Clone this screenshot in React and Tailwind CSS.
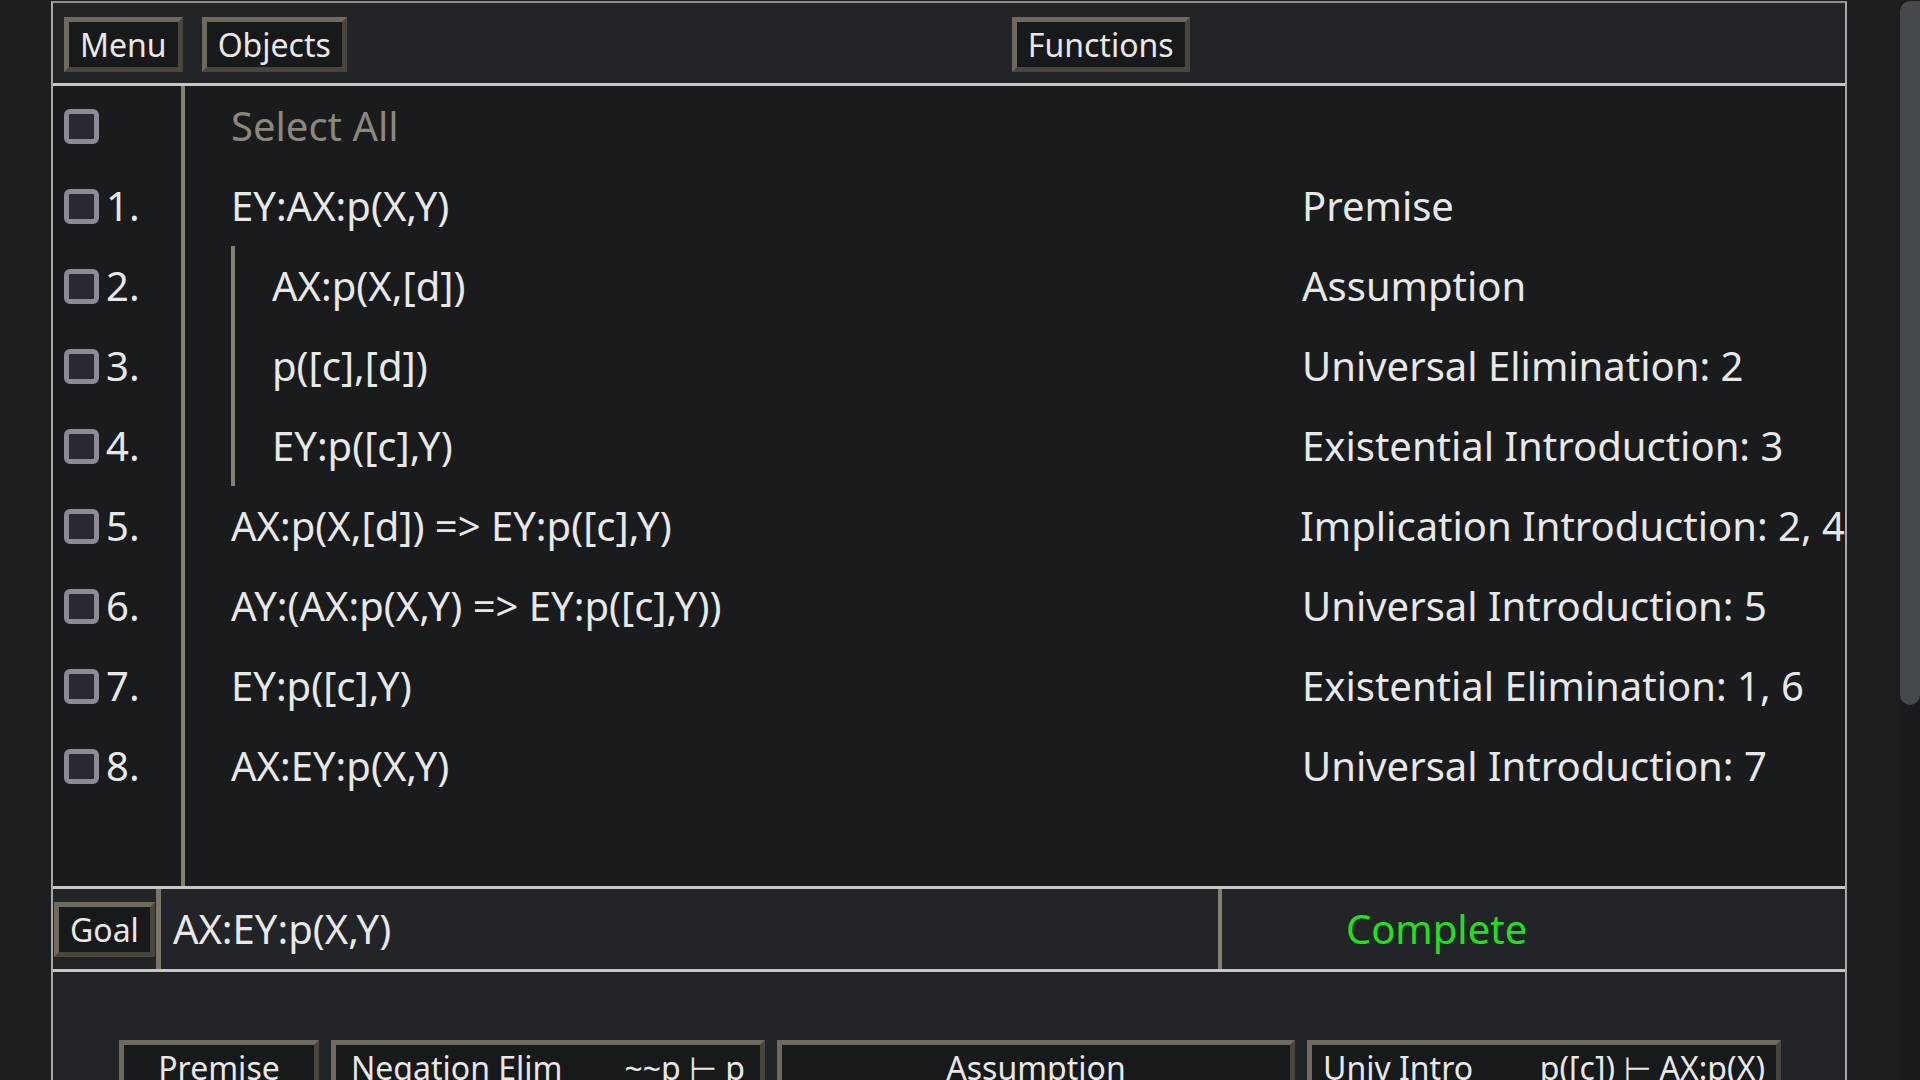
import React, { useState } from "react";

const lines = [
  { n: 1, text: "EY:AX:p(X,Y)", rule: "Premise" },
  { n: 2, text: "AX:p(X,[d])", rule: "Assumption", depth: 1 },
  { n: 3, text: "p([c],[d])", rule: "Universal Elimination: 2", depth: 1 },
  { n: 4, text: "EY:p([c],Y)", rule: "Existential Introduction: 3", depth: 1 },
  { n: 5, text: "AX:p(X,[d]) => EY:p([c],Y)", rule: "Implication Introduction: 2, 4" },
  { n: 6, text: "AY:(AX:p(X,Y) => EY:p([c],Y))", rule: "Universal Introduction: 5" },
  { n: 7, text: "EY:p([c],Y)", rule: "Existential Elimination: 1, 6" },
  { n: 8, text: "AX:EY:p(X,Y)", rule: "Universal Introduction: 7" },
];

const bevel =
  "border-[5px] border-t-[#6f6a5e] border-l-[#6f6a5e] border-r-[#4a463e] border-b-[#4a463e] bg-[#18191b]";

function Button({ children, className = "" }) {
  return (
    <button
      className={`${bevel} h-[55px] px-[11px] text-[32px] leading-[45px] text-[#e8e8e8] whitespace-nowrap ${className}`}
    >
      {children}
    </button>
  );
}

function Checkbox({ checked, onChange }) {
  return (
    <button
      onClick={onChange}
      className={`w-[35px] h-[35px] shrink-0 rounded-[6px] border-[5px] border-[#8c8a95] ${
        checked ? "bg-[#8c8a95]" : "bg-[#2a2833]"
      }`}
    />
  );
}

function Row({ line }) {
  return (
    <div className="h-[80px] flex items-center text-[40px] leading-none text-[#e8e8e8] whitespace-nowrap">
      <div className={line.depth ? "w-[1030px] pl-[37px] box-content" : "w-[1071px]"}>
        {line.text}
      </div>
      <div>{line.rule}</div>
    </div>
  );
}

export default function App() {
  const [selected, setSelected] = useState([]);
  const allOn = selected.length === lines.length;

  const toggle = (n) =>
    setSelected((prev) =>
      prev.includes(n) ? prev.filter((x) => x !== n) : [...prev, n]
    );

  const toggleAll = () => setSelected(allOn ? [] : lines.map((l) => l.n));

  const top = lines.filter((l) => l.n === 1);
  const sub = lines.filter((l) => l.depth);
  const rest = lines.filter((l) => l.n >= 5);

  return (
    <div
      className="flex h-screen w-full overflow-hidden bg-[#1d1e20] pt-[1px] pl-[51px]"
      style={{ fontFamily: '"Noto Sans", "DejaVu Sans", sans-serif' }}
    >
      <div className="w-[1796px] shrink-0 flex flex-col border-x-2 border-t-2 border-x-[#a9a9a9] border-t-[#8e8e8e]">
        {/* top bar */}
        <div className="h-[83px] shrink-0 flex items-center pt-[3px] pl-[11px] bg-[#232427] border-b-[3px] border-[#c6c6c6]">
          <Button className="px-[10px]">Menu</Button>
          <Button className="ml-[19px] px-[10px]">Objects</Button>
          <Button className="ml-[665px] px-[7px]">Functions</Button>
        </div>

        {/* proof */}
        <div className="h-[800px] shrink-0 flex bg-[#1a1b1d]">
          <div className="w-[132px] shrink-0 border-r-4 border-[#857e72]">
            <div className="h-[80px] flex items-center pl-[11px]">
              <Checkbox checked={allOn} onChange={toggleAll} />
            </div>
            {lines.map((l) => (
              <div key={l.n} className="h-[80px] flex items-center gap-[7px] pl-[11px]">
                <Checkbox checked={selected.includes(l.n)} onChange={() => toggle(l.n)} />
                <span className="text-[40px] leading-none text-[#e8e8e8]">{l.n}.</span>
              </div>
            ))}
          </div>

          <div className="flex-1 pl-[46px] overflow-hidden">
            <div className="h-[80px] flex items-center text-[40px] leading-none text-[#8c877d]">
              Select All
            </div>
            {top.map((l) => (
              <Row key={l.n} line={l} />
            ))}
            <div className="border-l-4 border-[#857e72]">
              {sub.map((l) => (
                <Row key={l.n} line={l} />
              ))}
            </div>
            {rest.map((l) => (
              <Row key={l.n} line={l} />
            ))}
          </div>
        </div>

        {/* goal */}
        <div className="h-[86px] shrink-0 flex items-center bg-[#232427] border-y-[3px] border-[#c6c6c6]">
          <Button className="ml-[1px] px-[10px]">Goal</Button>
          <div className="self-stretch w-[1062px] shrink-0 ml-[1px] border-l-[5px] border-[#7a7468] pl-[12px] flex items-center text-[40px] leading-none text-[#e8e8e8]">
            AX:EY:p(X,Y)
          </div>
          <div className="self-stretch flex-1 border-l-4 border-[#857e72] pl-[124px] flex items-center text-[40px] leading-none text-[#21e021]">
            Complete
          </div>
        </div>

        {/* rules */}
        <div className="flex-1 bg-[#232427] pt-[68px] pl-[66px]">
          <div className="flex gap-[12px]">
            <Button className="w-[200px] flex justify-center">Premise</Button>
            <Button className="w-[434px] flex justify-between px-[15px]">
              <span>Negation Elim</span>
              <span>~~p ⊢ p</span>
            </Button>
            <Button className="w-[518px] flex justify-center">Assumption</Button>
            <Button className="w-[474px] flex justify-between px-[10px]">
              <span>Univ Intro</span>
              <span>p([c]) ⊢ AX:p(X)</span>
            </Button>
          </div>
        </div>
      </div>

      <div className="flex-1" />

      {/* scrollbar */}
      <div className="w-[20px] shrink-0 bg-[#1a1b1d]">
        <div className="h-[704px] rounded-b-[10px] rounded-tl-[10px] bg-[#45494c]" />
      </div>
    </div>
  );
}
